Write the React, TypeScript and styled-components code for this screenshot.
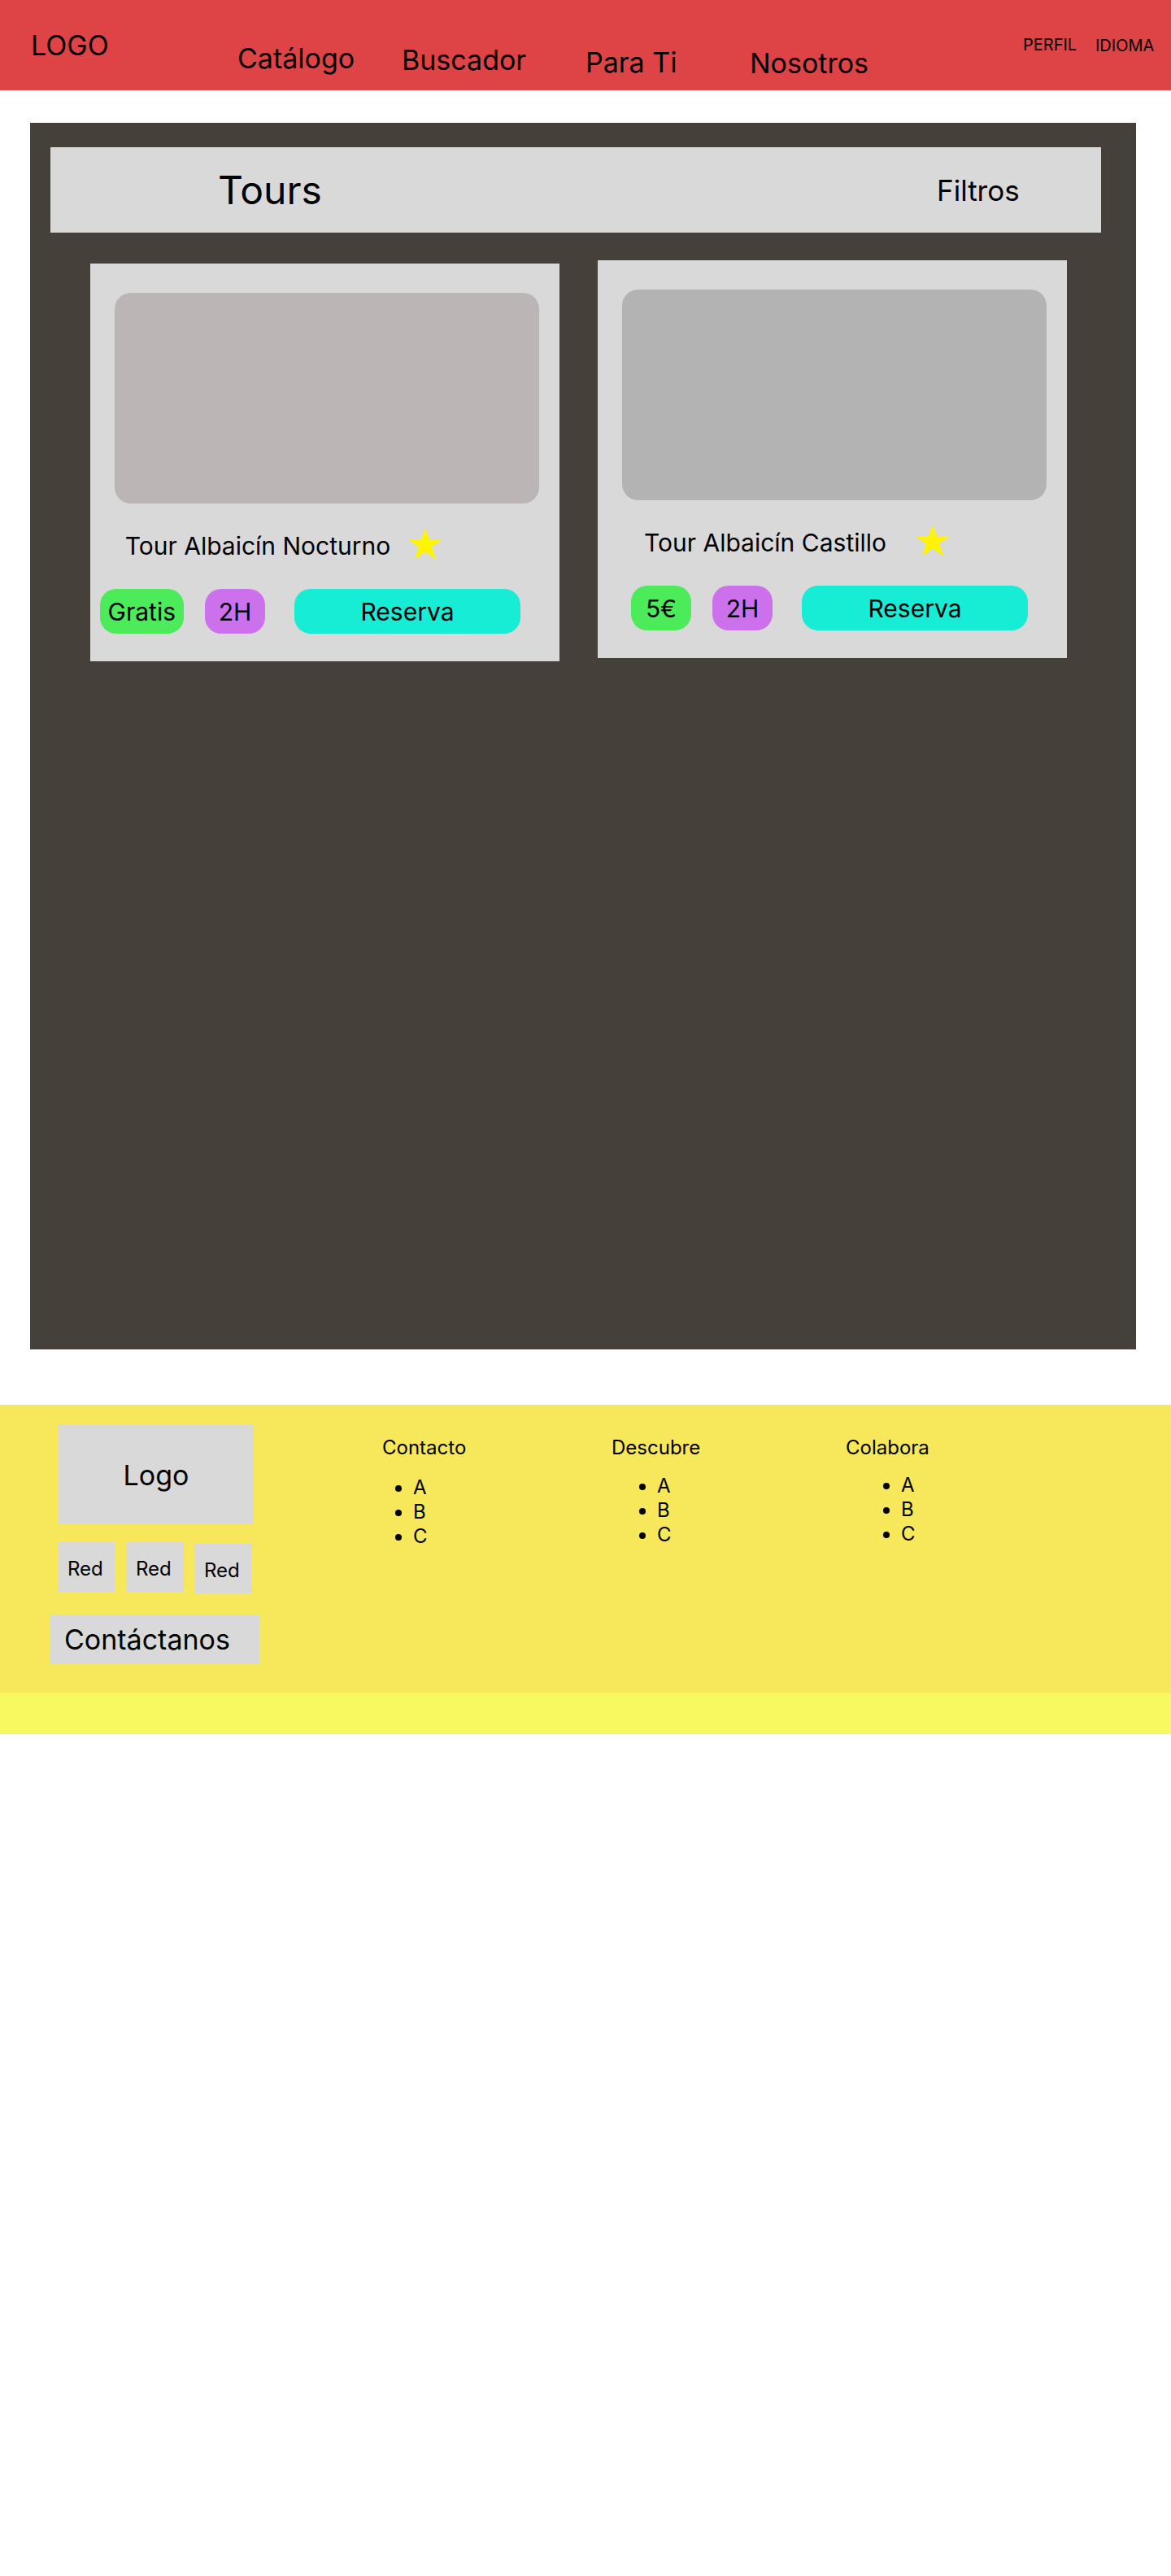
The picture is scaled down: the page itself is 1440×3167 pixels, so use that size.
import React from "react";
import styled, { createGlobalStyle } from "styled-components";

const GlobalStyle = createGlobalStyle`
  html, body {
    margin: 0;
    padding: 0;
    background: #ffffff;
  }
  body {
    font-family: Inter, "Noto Sans", "Liberation Sans", sans-serif;
    color: #000000;
  }
  * { box-sizing: border-box; }
`;

const Page = styled.div`
  width: 1440px;
  min-height: 3167px;
  background: #ffffff;
  display: flex;
  flex-direction: column;
`;

/* ---------- Header ---------- */
const Header = styled.header`
  height: 111px;
  background: #de4446;
  display: grid;
  grid-template-columns: 254px 202px 226px 202px 336px 89px 1fr;
  align-items: start;
  padding-left: 38px;
`;

const Brand = styled.div<{ $top: number }>`
  margin-top: ${(p) => p.$top}px;
  font-size: 34px;
  line-height: 41px;
  white-space: nowrap;
`;

const NavLink = styled.a<{ $top: number }>`
  margin-top: ${(p) => p.$top}px;
  font-size: 34px;
  line-height: 41px;
  color: #000;
  text-decoration: none;
  white-space: nowrap;
`;

const UtilLink = styled.a<{ $top: number }>`
  margin-top: ${(p) => p.$top}px;
  font-size: 20px;
  line-height: 24px;
  color: #000;
  text-decoration: none;
  white-space: nowrap;
`;

/* ---------- Main panel ---------- */
const Panel = styled.main`
  margin: 40px 0 0 37px;
  width: 1360px;
  height: 1508px;
  background: #454039;
  padding: 30px 43px 0 25px;
  display: flex;
  flex-direction: column;
`;

const Toolbar = styled.div`
  height: 105px;
  background: #d9d9d9;
  display: grid;
  grid-template-columns: 884px 1fr;
  align-items: center;
  padding-left: 206px;
`;

const PageTitle = styled.h1`
  margin: 0;
  font-size: 48px;
  font-weight: 400;
  line-height: 58px;
`;

const FilterButton = styled.span`
  font-size: 35px;
  line-height: 42px;
`;

const CardGrid = styled.div`
  margin-top: 34px;
  padding-left: 49px;
  display: flex;
  align-items: flex-start;
  gap: 47px;
`;

const Card = styled.article<{ $offset: number }>`
  margin-top: ${(p) => p.$offset}px;
  width: 577px;
  height: 489px;
  background: #d9d9d9;
  padding: 36px 0 0 0;
  display: flex;
  flex-direction: column;
`;

const Thumb = styled.div<{ $tone: string }>`
  margin-left: 30px;
  width: 522px;
  height: 259px;
  border-radius: 20px;
  background: ${(p) => p.$tone};
`;

const TitleRow = styled.div`
  margin-top: 30px;
  height: 40px;
  display: flex;
  align-items: center;
  padding-left: 30px;
`;

const TourName = styled.h2`
  margin: 0;
  width: 352px;
  padding-top: 3px;
  text-align: center;
  font-size: 30px;
  font-weight: 400;
  line-height: 36px;
  white-space: nowrap;
`;

const StarIcon = styled.svg`
  margin-left: 8px;
  width: 44px;
  height: 40px;
  flex: none;
`;

const ActionRow = styled.div`
  margin-top: 35px;
  height: 55px;
  padding-left: 11px;
  display: flex;
  align-items: center;
`;

const PriceSlot = styled.div`
  width: 104px;
  display: flex;
  justify-content: flex-end;
`;

const Pill = styled.span<{ $bg: string }>`
  min-width: 74px;
  height: 55px;
  padding: 0 10px;
  border-radius: 20px;
  background: ${(p) => p.$bg};
  display: flex;
  align-items: center;
  justify-content: center;
  font-size: 30px;
  line-height: 36px;
  white-space: nowrap;
`;

const DurationPill = styled(Pill)`
  margin-left: 26px;
`;

const BookButton = styled.button`
  margin-left: 36px;
  width: 278px;
  height: 55px;
  border: none;
  border-radius: 20px;
  background: #17ecd4;
  font-family: Inter, "Noto Sans", "Liberation Sans", sans-serif;
  font-size: 30px;
  line-height: 36px;
  color: #000;
  padding: 0;
  cursor: pointer;
`;

/* ---------- Footer ---------- */
const Footer = styled.footer`
  margin-top: 68px;
  height: 354px;
  background: #f7e75a;
  padding-top: 25px;
  display: grid;
  grid-template-columns: 470px 282px 288px 1fr;
  align-items: start;
`;

const FooterBrand = styled.div`
  padding-left: 72px;
  display: flex;
  flex-direction: column;
  align-items: flex-start;
`;

const LogoBox = styled.div`
  width: 240px;
  height: 122px;
  background: #d9d9d9;
  display: flex;
  align-items: center;
  justify-content: center;
  font-size: 34px;
  line-height: 41px;
`;

const SocialRow = styled.div`
  margin-top: 22px;
  display: flex;
  align-items: flex-start;
  gap: 14px;
`;

const SocialBox = styled.a<{ $drop: number }>`
  margin-top: ${(p) => p.$drop}px;
  width: 70px;
  height: 61px;
  background: #d9d9d9;
  display: flex;
  align-items: center;
  padding: 3px 0 0 11px;
  font-size: 24px;
  line-height: 29px;
  color: #000;
  text-decoration: none;
`;

const ContactButton = styled.a`
  margin: 26px 0 0 -10px;
  width: 257px;
  height: 61px;
  background: #d9d9d9;
  display: flex;
  align-items: center;
  padding-left: 17px;
  font-size: 34px;
  line-height: 41px;
  color: #000;
  text-decoration: none;
  white-space: nowrap;
`;

const LinkColumn = styled.div`
  margin-top: 13px;
  display: flex;
  flex-direction: column;
  align-items: flex-start;
`;

const ColumnTitle = styled.h3`
  margin: 0;
  font-size: 24px;
  font-weight: 400;
  line-height: 29px;
`;

const LinkList = styled.ul<{ $indent: number; $gap: number }>`
  margin: ${(p) => p.$gap}px 0 0 ${(p) => p.$indent}px;
  padding-left: 40px;
  list-style: disc;
  font-size: 24px;
  line-height: 30px;
`;

const BottomStrip = styled.div`
  height: 51px;
  background: #f8f961;
`;

const Star = () => (
  <StarIcon viewBox="0 0 44 40" aria-hidden="true">
    <polygon
      fill="#fff500"
      points="22,0.5 27.2,14.4 43,14.4 30.2,23.3 35,38.8 22,29.6 9,38.8 13.8,23.3 1,14.4 16.8,14.4"
    />
  </StarIcon>
);

type Tour = {
  name: string;
  price: string;
  duration: string;
  tone: string;
  offset: number;
};

const tours: Tour[] = [
  { name: "Tour Albaicín Nocturno", price: "Gratis", duration: "2H", tone: "#bbb6b5", offset: 4 },
  { name: "Tour Albaicín Castillo", price: "5€", duration: "2H", tone: "#b3b3b3", offset: 0 },
];

const footerColumns = [
  { title: "Contacto", indent: -2, gap: 20 },
  { title: "Descubre", indent: 16, gap: 18 },
  { title: "Colabora", indent: 28, gap: 17 },
];

export default function App() {
  return (
    <>
      <GlobalStyle />
      <Page>
        <Header>
          <Brand $top={35}>LOGO</Brand>
          <NavLink href="#" $top={51}>Catálogo</NavLink>
          <NavLink href="#" $top={53}>Buscador</NavLink>
          <NavLink href="#" $top={56}>Para Ti</NavLink>
          <NavLink href="#" $top={57}>Nosotros</NavLink>
          <UtilLink href="#" $top={43}>PERFIL</UtilLink>
          <UtilLink href="#" $top={44}>IDIOMA</UtilLink>
        </Header>

        <Panel>
          <Toolbar>
            <PageTitle>Tours</PageTitle>
            <FilterButton>Filtros</FilterButton>
          </Toolbar>

          <CardGrid>
            {tours.map((t) => (
              <Card key={t.name} $offset={t.offset}>
                <Thumb $tone={t.tone} />
                <TitleRow>
                  <TourName>{t.name}</TourName>
                  <Star />
                </TitleRow>
                <ActionRow>
                  <PriceSlot>
                    <Pill $bg="#4beb59">{t.price}</Pill>
                  </PriceSlot>
                  <DurationPill $bg="#cd70ec">{t.duration}</DurationPill>
                  <BookButton>Reserva</BookButton>
                </ActionRow>
              </Card>
            ))}
          </CardGrid>
        </Panel>

        <Footer>
          <FooterBrand>
            <LogoBox>Logo</LogoBox>
            <SocialRow>
              <SocialBox href="#" $drop={0}>Red</SocialBox>
              <SocialBox href="#" $drop={0}>Red</SocialBox>
              <SocialBox href="#" $drop={2}>Red</SocialBox>
            </SocialRow>
            <ContactButton href="#">Contáctanos</ContactButton>
          </FooterBrand>
          {footerColumns.map((c) => (
            <LinkColumn key={c.title}>
              <ColumnTitle>{c.title}</ColumnTitle>
              <LinkList $indent={c.indent} $gap={c.gap}>
                <li>A</li>
                <li>B</li>
                <li>C</li>
              </LinkList>
            </LinkColumn>
          ))}
        </Footer>
        <BottomStrip />
      </Page>
    </>
  );
}
